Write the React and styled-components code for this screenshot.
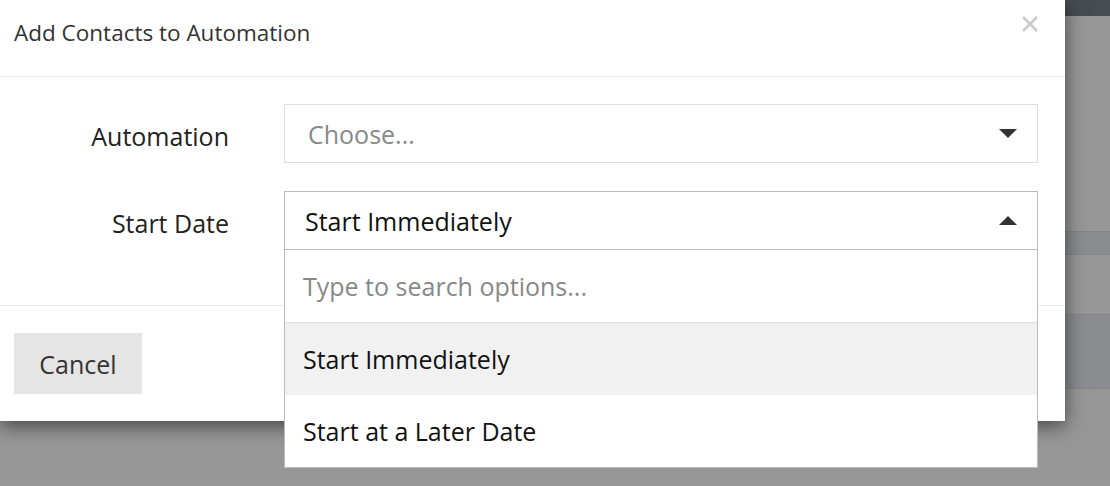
import React, { useState } from 'react';
import styled, { createGlobalStyle } from 'styled-components';

const GlobalStyle = createGlobalStyle`
  html, body {
    margin: 0;
    padding: 0;
    background: #979797;
    font-family: "Open Sans", "Liberation Sans", sans-serif;
  }
`;

const Page = styled.div`
  position: relative;
  width: 1110px;
  height: 486px;
  overflow: hidden;
  background: #979797;
`;

const Backdrop = styled.div`
  display: flex;
  flex-direction: column;
  height: 100%;
`;

const TopBar = styled.div`
  height: 16px;
  background: linear-gradient(90deg, #33383e, #474c52);
`;

const Band = styled.div`
  height: ${(p) => p.h}px;
  background: ${(p) => (p.tint ? '#8b8c90' : '#979797')};
  border-top: ${(p) => (p.line ? '1px solid #848586' : 'none')};
`;

const Modal = styled.div`
  position: absolute;
  top: 0;
  left: 0;
  width: 1065px;
  height: 421px;
  background: #fff;
  box-shadow: 0 5px 18px rgba(0, 0, 0, 0.55);
  display: flex;
  flex-direction: column;
`;

const Header = styled.div`
  height: 77px;
  flex-shrink: 0;
  box-sizing: border-box;
  border-bottom: 1px solid #e8e8e8;
  padding: 0 14px;
  display: flex;
  align-items: center;
  justify-content: space-between;
`;

const Title = styled.h4`
  margin: 0 0 11px 0;
  font-size: 22.5px;
  font-weight: 400;
  color: #333;
`;

const Close = styled.button`
  border: none;
  background: none;
  padding: 0;
  margin: 0 13px 28px 0;
  color: #cbcbcb;
  display: flex;
`;

const Body = styled.div`
  padding: 27px 27px 0 0;
  height: 229px;
  flex-shrink: 0;
  box-sizing: border-box;
  border-bottom: 1px solid #e8e8e8;
  display: grid;
  grid-template-columns: 229px 1fr;
  column-gap: 55px;
  row-gap: 28px;
  align-content: start;
`;

const Label = styled.label`
  font-size: 25px;
  color: #222;
  text-align: right;
  align-self: center;
  padding-top: 5px;
`;

const Field = styled.div`
  position: relative;
`;

const Select = styled.div`
  height: 59px;
  box-sizing: border-box;
  border: 1px solid ${(p) => (p.open ? '#bbb' : '#ddd')};
  display: flex;
  align-items: center;
  justify-content: space-between;
  padding: 0 20px 0 ${(p) => (p.open ? 20 : 23)}px;
  font-size: 25px;
  color: ${(p) => (p.placeholder ? '#888' : '#111')};
`;

const Caret = styled.span`
  width: 0;
  height: 0;
  border-left: 9px solid transparent;
  border-right: 9px solid transparent;
  ${(p) => (p.up ? 'border-bottom: 9px solid #333;' : 'border-top: 9px solid #333;')}
`;

const Menu = styled.div`
  position: absolute;
  top: 58px;
  left: 0;
  right: 0;
  background: #fff;
  border: 1px solid #bbb;
  z-index: 2;
`;

const Search = styled.input`
  display: block;
  width: 100%;
  box-sizing: border-box;
  height: 73px;
  border: none;
  border-bottom: 1px solid #ddd;
  padding: 0 18px;
  font-family: inherit;
  font-size: 25px;
  color: #111;
  outline: none;
  &::placeholder {
    color: #888;
  }
`;

const Option = styled.div`
  height: 72px;
  display: flex;
  align-items: center;
  padding: 0 18px;
  font-size: 25px;
  color: #111;
  background: ${(p) => (p.active ? '#f1f1f1' : '#fff')};
`;

const Footer = styled.div`
  flex: 1;
  padding: 27px 14px;
  box-sizing: border-box;
`;

const CancelButton = styled.button`
  width: 128px;
  height: 61px;
  border: none;
  background: #e5e5e5;
  font-family: inherit;
  font-size: 25px;
  color: #333;
`;

const options = ['Start Immediately', 'Start at a Later Date'];

const App = () => {
  const [selected, setSelected] = useState(0);

  return (
    <Page>
      <GlobalStyle />
      <Backdrop>
        <TopBar />
        <Band h={216} />
        <Band h={23} tint line />
        <Band h={59} line />
        <Band h={73} tint line />
        <Band h={98} line />
      </Backdrop>
      <Modal>
        <Header>
          <Title>Add Contacts to Automation</Title>
          <Close>
            <svg width="16" height="16" viewBox="0 0 16 16">
              <path d="M1 1L15 15M15 1L1 15" stroke="currentColor" strokeWidth="2.6" />
            </svg>
          </Close>
        </Header>
        <Body>
          <Label>Automation</Label>
          <Select placeholder>
            Choose...
            <Caret />
          </Select>
          <Label>Start Date</Label>
          <Field>
            <Select open>
              {options[selected]}
              <Caret up />
            </Select>
            <Menu>
              <Search placeholder="Type to search options..." />
              {options.map((o, i) => (
                <Option key={o} active={i === selected} onClick={() => setSelected(i)}>
                  {o}
                </Option>
              ))}
            </Menu>
          </Field>
        </Body>
        <Footer>
          <CancelButton>Cancel</CancelButton>
        </Footer>
      </Modal>
    </Page>
  );
};

export default App;
